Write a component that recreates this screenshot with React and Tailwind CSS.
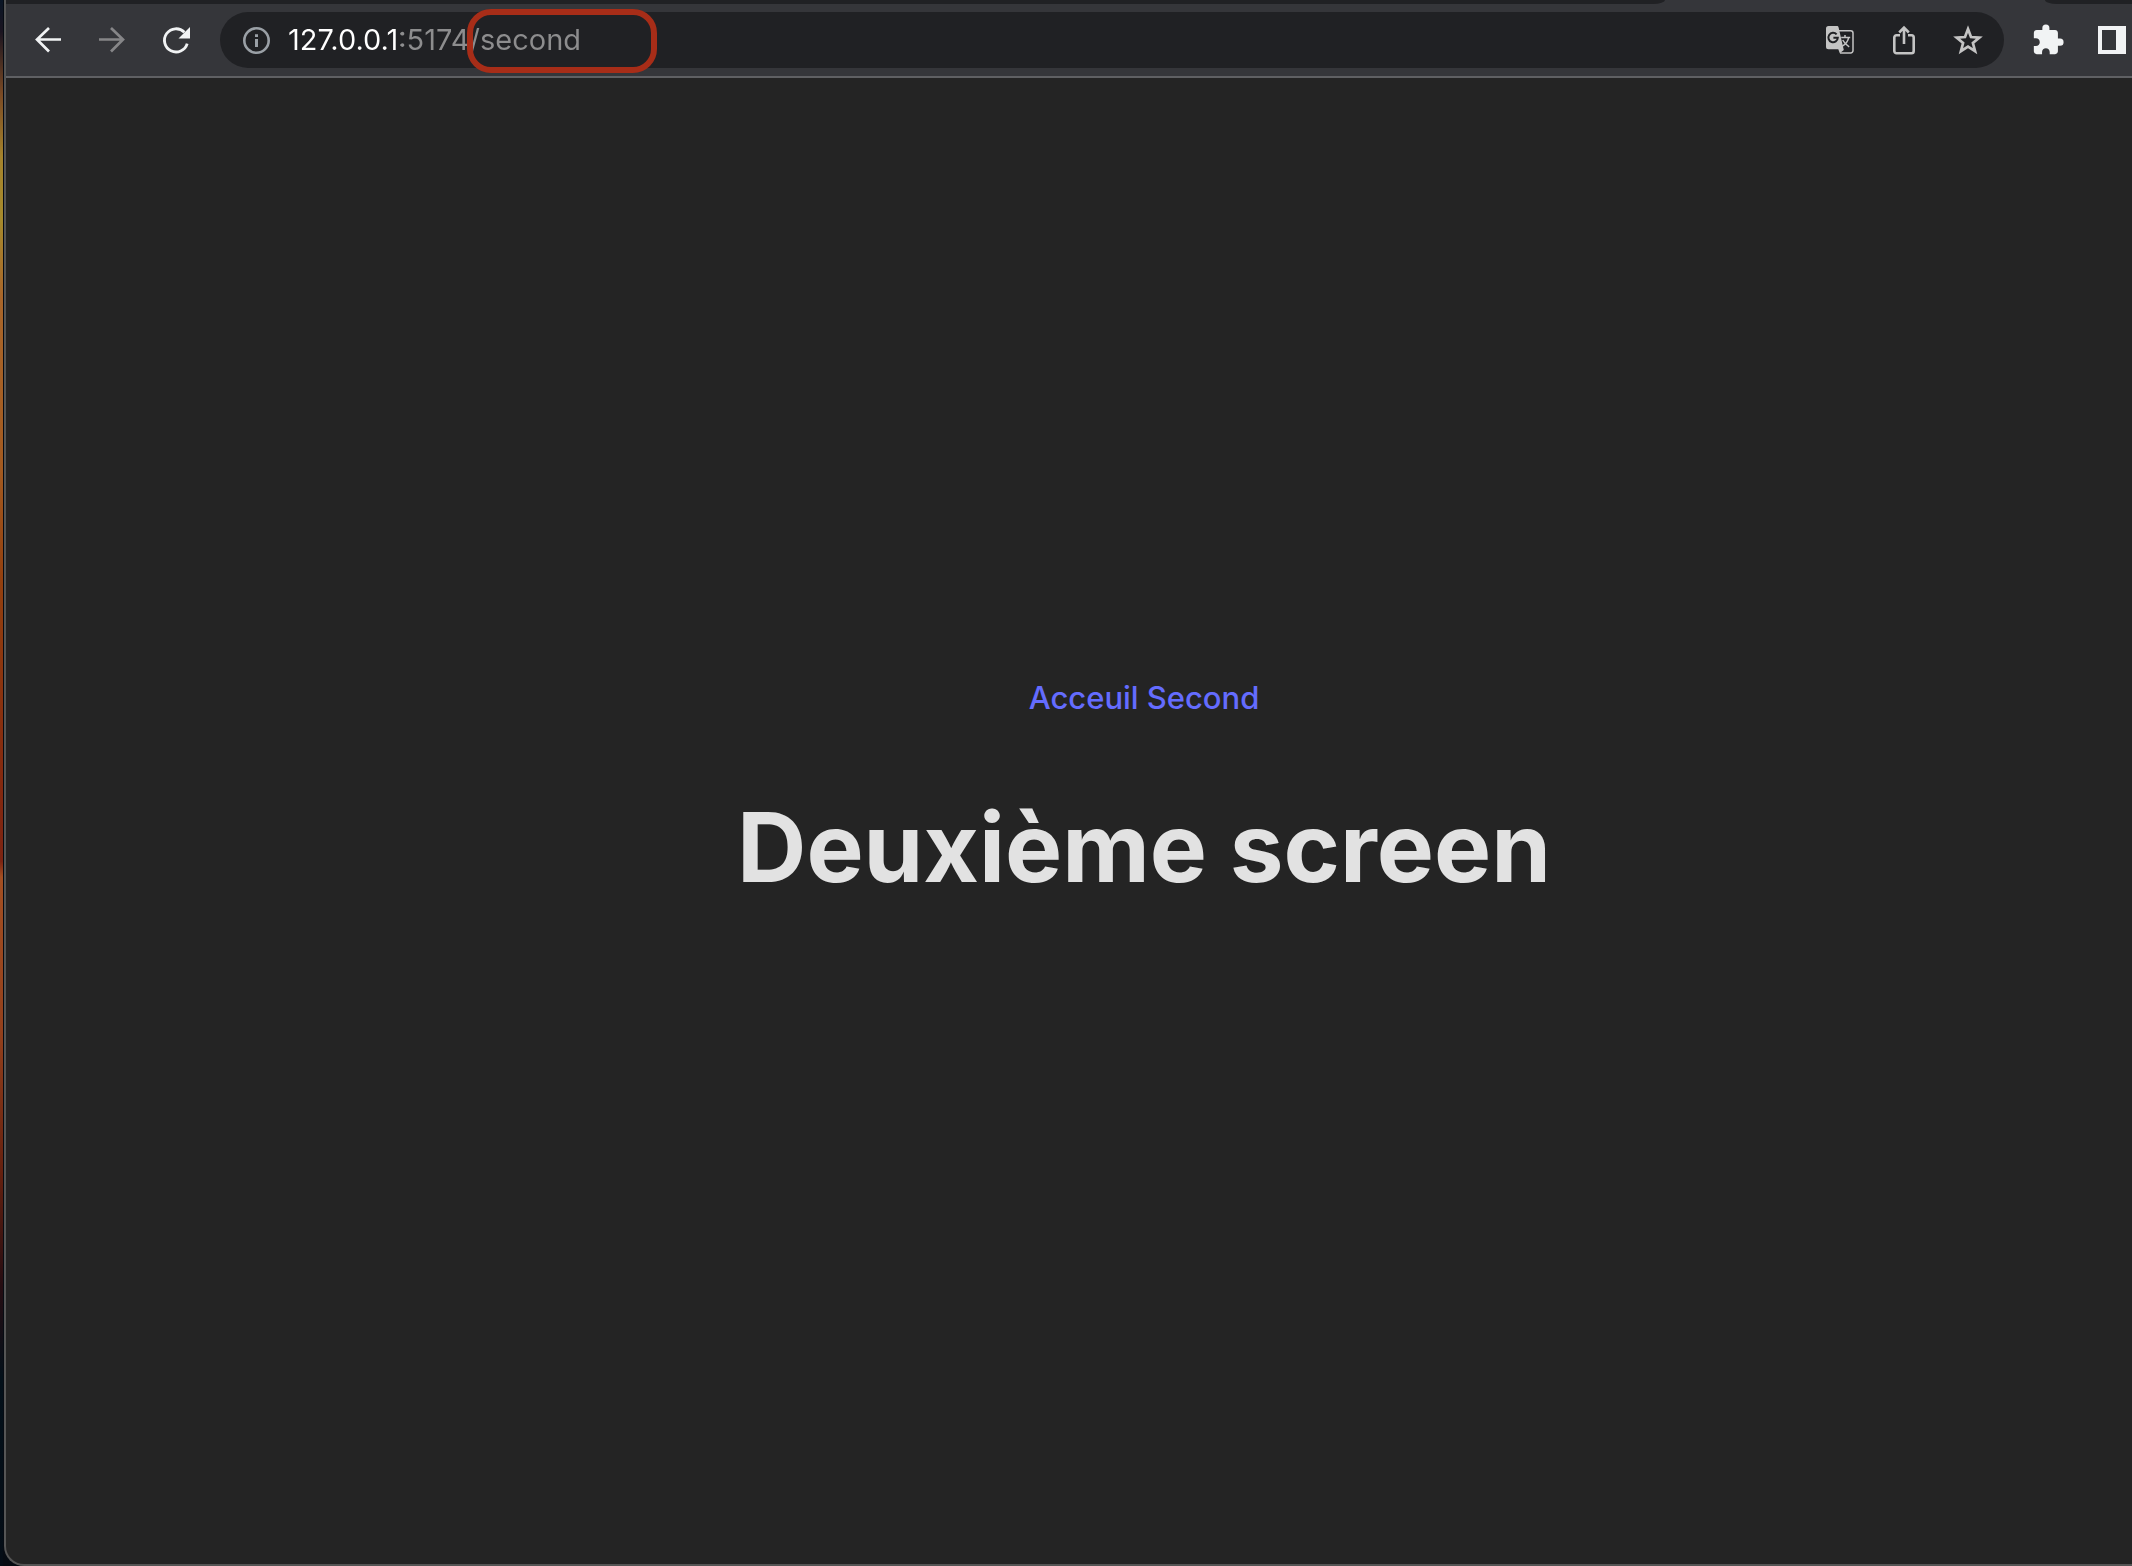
import { useState } from "react";

const iconButton = "flex h-14 w-16 shrink-0 items-center justify-center";

function BackIcon() {
  return (
    <svg className="size-8" viewBox="0 0 32 32" fill="none" stroke="currentColor" strokeWidth="2.7" aria-hidden="true">
      <path d="M29 15.500H5M17 4 5 15.500 17 27.500" />
    </svg>
  );
}

function ForwardIcon() {
  return (
    <svg className="size-8" viewBox="0 0 32 32" fill="none" stroke="currentColor" strokeWidth="2.7" aria-hidden="true">
      <path d="M3 15.500h24M15 4l12 11.500-12 12" />
    </svg>
  );
}

function ReloadIcon() {
  return (
    <svg className="size-8" viewBox="0 0 32 32" aria-hidden="true">
      <path d="M27.2 19.6A11.6 11.6 0 1 1 24.4 8.3" fill="none" stroke="currentColor" strokeWidth="2.8" />
      <path d="M30 3v11.5H18.5z" fill="currentColor" />
    </svg>
  );
}

function InfoIcon() {
  return (
    <svg className="size-8 shrink-0" viewBox="0 0 32 32" aria-hidden="true">
      <circle cx="16.500" cy="16.500" r="12.200" fill="none" stroke="currentColor" strokeWidth="2.600" />
      <path d="M15 10.200h3v2.800h-3zM15 15h3v8h-3z" fill="currentColor" />
    </svg>
  );
}

function TranslateIcon() {
  return (
    <svg className="size-8" viewBox="0 0 32 32" fill="none" aria-hidden="true">
      <path d="M14.5 6.8h12.2a2.3 2.3 0 0 1 2.3 2.3v17.5a2.3 2.3 0 0 1-2.3 2.3H16" stroke="currentColor" strokeWidth="1.5" />
      <path d="M4.5 2h8.3c1 0 1.5.5 1.8 1.4L19.8 26l-4 3.2-1.5-4H4.5A2.5 2.5 0 0 1 2 22.700V4.500A2.500 2.500 0 0 1 4.500 2z" fill="currentColor" />
      <path d="M12.600 10.400a4.700 4.700 0 1 0 1.200 3.400H9.400" stroke="#202124" strokeWidth="2" />
      <path d="M17.200 13.400h9M21 11v2.400M24.700 13.400c-.7 4-3.200 7-6.700 9M18.700 16c1.300 2.500 3.600 5 6.500 6.800" stroke="currentColor" strokeWidth="1.500" />
    </svg>
  );
}

function ShareIcon() {
  return (
    <svg className="size-8" viewBox="0 0 32 32" fill="none" stroke="currentColor" strokeWidth="2.600" aria-hidden="true">
      <path d="M12 11.300H8.500a2.200 2.200 0 0 0-2.200 2.200v13.600a2.200 2.200 0 0 0 2.200 2.200h15a2.200 2.200 0 0 0 2.200-2.200V13.500a2.200 2.200 0 0 0-2.200-2.200H20M16 20V4M11.200 8.500 16 3.700l4.800 4.800" />
    </svg>
  );
}

function StarIcon() {
  return (
    <svg className="size-8" viewBox="0 0 32 32" fill="none" stroke="currentColor" strokeWidth="2.700" aria-hidden="true">
      <path d="m16 5 3 8 8.400.600-6.500 5.400 2.200 8.200L16 22.700l-7.100 4.500 2.200-8.200-6.500-5.400 8.400-.600z" />
    </svg>
  );
}

function PuzzleIcon() {
  return (
    <svg className="size-[34px]" viewBox="0 0 24 24" fill="currentColor" aria-hidden="true">
      <path d="M20.500 11H19V7c0-1.100-.900-2-2-2h-4V3.500a2.500 2.500 0 0 0-5 0V5H4c-1.100 0-1.990.900-1.990 2v3.800H3.500c1.490 0 2.700 1.210 2.700 2.700s-1.210 2.700-2.700 2.700H2V20c0 1.100.900 2 2 2h3.800v-1.500c0-1.490 1.210-2.700 2.700-2.700s2.700 1.210 2.700 2.700V22H17c1.100 0 2-.900 2-2v-4h1.500a2.500 2.500 0 0 0 0-5z" />
    </svg>
  );
}

function PanelIcon() {
  return (
    <svg className="size-8" viewBox="0 0 32 32" fill="currentColor" aria-hidden="true">
      <path fillRule="evenodd" d="M2 2h28v28H2zM6 6v20h14V6z" />
    </svg>
  );
}

function AddressBar() {
  const [url, setUrl] = useState("127.0.0.1:5174/second");
  return (
    <div className="relative mx-3 flex h-14 min-w-0 flex-1 items-center rounded-full bg-[#202124] pr-1 pl-5 text-[#c4c4c4]">
      <button type="button" aria-label="Site information" className="mr-4 text-[#9aa0a6]">
        <InfoIcon />
      </button>
      <input
        aria-label="Address"
        value={url}
        onChange={(e) => setUrl(e.target.value)}
        className="h-10 min-w-0 flex-1 bg-linear-to-r from-white from-[113px] to-[#8d8d8e] to-[113px] bg-clip-text text-[29px] text-transparent caret-white outline-none"
      />
      <button type="button" aria-label="Translate" className={iconButton}><TranslateIcon /></button>
      <button type="button" aria-label="Share" className={iconButton}><ShareIcon /></button>
      <button type="button" aria-label="Bookmark" className={iconButton}><StarIcon /></button>
      <span className="pointer-events-none absolute -top-[3px] left-[247px] h-16 w-[190px] rounded-[24px] border-[6px] border-[#a72d18]" />
    </div>
  );
}

function Toolbar() {
  return (
    <header className="border-b-2 border-[#5f6063] bg-[#35363a]">
      <div className="flex h-1 justify-between">
        <div className="mr-[380px] flex-1 rounded-br-[12px_4px] bg-[#202124]" />
        <div className="w-[87px] rounded-bl-[12px_4px] bg-[#202124]" />
      </div>
      <div className="flex h-[72px] items-center pl-2.5 text-[#f1f3f4]">
        <button type="button" aria-label="Back" className={iconButton}><BackIcon /></button>
        <button type="button" aria-label="Forward" className={`${iconButton} text-[#868688]`}><ForwardIcon /></button>
        <button type="button" aria-label="Reload" className={iconButton}><ReloadIcon /></button>
        <AddressBar />
        <button type="button" aria-label="Extensions" className={iconButton}><PuzzleIcon /></button>
        <button type="button" aria-label="Side panel" className={`${iconButton} -mr-3`}><PanelIcon /></button>
      </div>
    </header>
  );
}

export default function App() {
  return (
    <div className="min-h-screen bg-[#060b12] bg-[linear-gradient(to_bottom,#0a1626_0%,#1a1420_2%,#7a4a24_6%,#a5832c_10%,#a68a2c_14%,#a9662a_19%,#a35a20_30%,#93400f_37%,#84290f_50%,#7c2412_55%,#a34f22_56%,#93401c_66%,#64200f_75%,#260d12_82%,#03101a_88%,#050d16_100%)] bg-[size:3px_100%] bg-no-repeat pl-1 font-['Inter',sans-serif]">
      <div className="flex min-h-screen flex-col overflow-hidden rounded-bl-[20px] border-b-2 border-l-2 border-[#555555] bg-[#242424]">
        <Toolbar />
        <main className="flex flex-1 flex-col items-center justify-center pt-1 pl-[150px]">
          <nav className="flex gap-2 text-[31px] leading-[48px] font-medium text-[#646cff]">
            <a href="/">Acceuil</a>
            <a href="/second">Second</a>
          </nav>
          <h1 className="my-[70px] text-[96px] leading-[110px] font-bold text-[#e2e2e2]">Deuxième screen</h1>
        </main>
      </div>
    </div>
  );
}
